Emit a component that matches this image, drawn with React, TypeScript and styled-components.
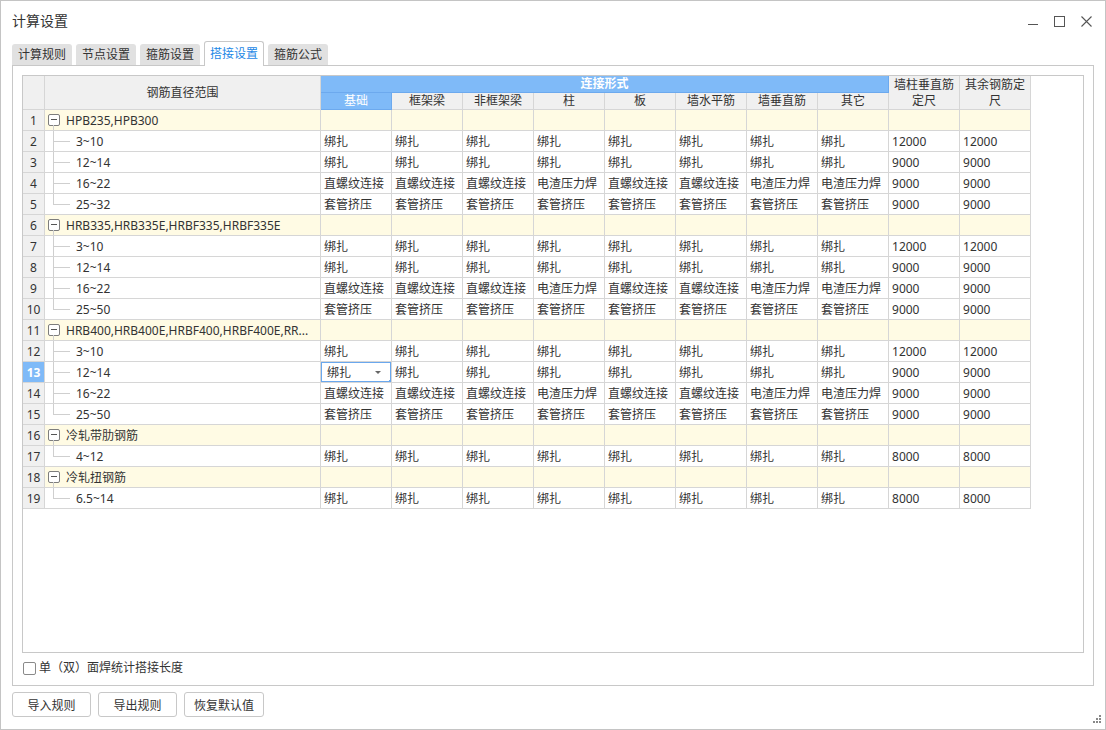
import React from "react";
import styled, { createGlobalStyle, css } from "styled-components";

const GlobalStyle = createGlobalStyle`
  html, body {
    margin: 0;
    padding: 0;
    background: #ffffff;
  }
  body {
    font-family: "Noto Sans", "Noto Sans CJK SC", sans-serif;
    font-size: 12px;
    color: #333333;
  }
  * { box-sizing: border-box; }
`;

type Group = { kind: "group"; num: number; label: string };
type Item = {
  kind: "item";
  num: number;
  label: string;
  values: string[];
  last: boolean;
  editing?: boolean;
};
type Row = Group | Item;

const tie = Array(8).fill("绑扎");
const thread = [
  "直螺纹连接",
  "直螺纹连接",
  "直螺纹连接",
  "电渣压力焊",
  "直螺纹连接",
  "直螺纹连接",
  "电渣压力焊",
  "电渣压力焊",
];
const sleeve = Array(8).fill("套管挤压");

// the grid shows the long group name already shortened
const rows: Row[] = [
  { kind: "group", num: 1, label: "HPB235,HPB300" },
  { kind: "item", num: 2, label: "3~10", values: [...tie, "12000", "12000"], last: false },
  { kind: "item", num: 3, label: "12~14", values: [...tie, "9000", "9000"], last: false },
  { kind: "item", num: 4, label: "16~22", values: [...thread, "9000", "9000"], last: false },
  { kind: "item", num: 5, label: "25~32", values: [...sleeve, "9000", "9000"], last: true },
  { kind: "group", num: 6, label: "HRB335,HRB335E,HRBF335,HRBF335E" },
  { kind: "item", num: 7, label: "3~10", values: [...tie, "12000", "12000"], last: false },
  { kind: "item", num: 8, label: "12~14", values: [...tie, "9000", "9000"], last: false },
  { kind: "item", num: 9, label: "16~22", values: [...thread, "9000", "9000"], last: false },
  { kind: "item", num: 10, label: "25~50", values: [...sleeve, "9000", "9000"], last: true },
  { kind: "group", num: 11, label: "HRB400,HRB400E,HRBF400,HRBF400E,RR..." },
  { kind: "item", num: 12, label: "3~10", values: [...tie, "12000", "12000"], last: false },
  { kind: "item", num: 13, label: "12~14", values: [...tie, "9000", "9000"], last: false, editing: true },
  { kind: "item", num: 14, label: "16~22", values: [...thread, "9000", "9000"], last: false },
  { kind: "item", num: 15, label: "25~50", values: [...sleeve, "9000", "9000"], last: true },
  { kind: "group", num: 16, label: "冷轧带肋钢筋" },
  { kind: "item", num: 17, label: "4~12", values: [...tie, "8000", "8000"], last: true },
  { kind: "group", num: 18, label: "冷轧扭钢筋" },
  { kind: "item", num: 19, label: "6.5~14", values: [...tie, "8000", "8000"], last: true },
];

const subHeaders = ["基础", "框架梁", "非框架梁", "柱", "板", "墙水平筋", "墙垂直筋", "其它"];
const tabs = ["计算规则", "节点设置", "箍筋设置", "搭接设置", "箍筋公式"];

const Window = styled.div`
  position: relative;
  width: 1106px;
  height: 730px;
  border: 1px solid #c4c4c4;
  background: #ffffff;
  display: flex;
  flex-direction: column;
`;

const TitleBar = styled.div`
  height: 40px;
  padding: 0 11px;
  display: flex;
  align-items: center;
  justify-content: space-between;
`;

const Title = styled.div`
  font-size: 14px;
  color: #333;
  line-height: 20px;
`;

const Controls = styled.div`
  display: flex;
  align-items: center;
  gap: 16px;
  padding-right: 2px;
  color: #555;
  svg { display: block; }
`;

const TabBar = styled.div`
  height: 24px;
  padding-left: 11px;
  display: flex;
  align-items: flex-end;
  gap: 4px;
  position: relative;
  z-index: 1;
`;

const Tab = styled.div<{ $active?: boolean }>`
  width: 60px;
  text-align: center;
  border-radius: 3px 3px 0 0;
  ${(p) =>
    p.$active
      ? css`
          height: 25px;
          line-height: 24px;
          margin-bottom: -1px;
          background: #ffffff;
          color: #1d88e6;
          border: 1px solid #c8c8c8;
          border-bottom: none;
        `
      : css`
          height: 21px;
          line-height: 21px;
          background: #e1e1e1;
          color: #333;
        `}
`;

const Panel = styled.div`
  margin: 0 11px;
  height: 621px;
  border: 1px solid #c8c8c8;
  padding: 9px 9px 0 9px;
  display: flex;
  flex-direction: column;
`;

const GridBox = styled.div`
  height: 578px;
  border: 1px solid #c8c8c8;
  overflow: hidden;
  background: #fff;
`;

const Grid = styled.table`
  border-collapse: separate;
  border-spacing: 0;
  table-layout: fixed;
  width: 1008px;
`;

const cellBase = css`
  padding: 0;
  border-right: 1px solid #d6d6d6;
  border-bottom: 1px solid #d6d6d6;
  white-space: nowrap;
  overflow: hidden;
  font-weight: normal;
`;

const HeadCell = styled.th<{ $blue?: boolean; $wrap?: boolean }>`
  ${cellBase};
  line-height: 16px;
  text-align: center;
  vertical-align: middle;
  background: ${(p) => (p.$blue ? "#7fbaf8" : "#f0f0f0")};
  color: ${(p) => (p.$blue ? "#ffffff" : "#333")};
  ${(p) =>
    p.$blue &&
    css`
      border-right-color: #6ca9ee;
      border-bottom-color: #6ca9ee;
    `}
  ${(p) =>
    p.$wrap &&
    css`
      white-space: normal;
      word-break: break-all;
      padding: 0 1px;
    `}
`;

const GroupTitle = styled(HeadCell)`
  font-weight: bold;
  height: 15px;
`;

const SubHead = styled(HeadCell)`
  height: 16px;
`;

const NumCell = styled.td<{ $active?: boolean }>`
  ${cellBase};
  height: 20px;
  text-align: center;
  background: ${(p) => (p.$active ? "#7fbaf8" : "#f0f0f0")};
  color: ${(p) => (p.$active ? "#fff" : "#333")};
  font-weight: ${(p) => (p.$active ? "bold" : "normal")};
`;

const Cell = styled.td<{ $group?: boolean }>`
  ${cellBase};
  height: 20px;
  padding-left: 3px;
  background: ${(p) => (p.$group ? "#fffbe4" : "#ffffff")};
  position: relative;
`;

const NameCell = styled(Cell)`
  padding-left: 3px;
  padding-right: 4px;
`;

const NameWrap = styled.div`
  display: flex;
  align-items: center;
  height: 20px;
  min-width: 0;
`;

const Collapse = styled.span`
  position: relative;
  flex: none;
  width: 12px;
  height: 12px;
  border: 1px solid #7d7d7d;
  border-radius: 2px;
  background: #fff;
  margin-right: 6px;
  &::before {
    content: "";
    position: absolute;
    left: 2px;
    right: 2px;
    top: 4px;
    border-top: 1px solid #555;
  }
  &::after {
    content: "";
    position: absolute;
    left: 4px;
    top: 10px;
    height: 6px;
    border-left: 1px solid #cfcfcf;
  }
`;

const Connector = styled.span<{ $last: boolean }>`
  position: relative;
  flex: none;
  width: 23px;
  height: 20px;
  margin-right: 5px;
  &::before {
    content: "";
    position: absolute;
    left: 5px;
    top: -1px;
    bottom: ${(p) => (p.$last ? "10px" : "-1px")};
    border-left: 1px solid #cfcfcf;
  }
  &::after {
    content: "";
    position: absolute;
    left: 5px;
    top: 10px;
    width: 17px;
    border-top: 1px solid #cfcfcf;
  }
`;

const Label = styled.span`
  white-space: nowrap;
`;

const Editor = styled.div`
  position: absolute;
  left: -1px;
  top: -1px;
  right: -1px;
  bottom: -1px;
  border: 2px solid #6aa8ee;
  background: #fff;
  display: flex;
  align-items: center;
  justify-content: space-between;
  padding: 0 9px 0 5px;
  &::after {
    content: "";
    position: absolute;
    right: -3px;
    bottom: -3px;
    width: 4px;
    height: 4px;
    background: #6aa8ee;
  }
`;

const Caret = styled.span`
  width: 0;
  height: 0;
  border-left: 3px solid transparent;
  border-right: 3px solid transparent;
  border-top: 3px solid #666;
`;

const Options = styled.label`
  display: flex;
  align-items: center;
  height: 14px;
  margin-top: 8px;
  margin-left: 1px;
  color: #333;
  line-height: 14px;
`;

const Check = styled.span`
  width: 13px;
  height: 13px;
  border: 1px solid #8a8a8a;
  border-radius: 2px;
  background: #fff;
  margin-right: 3px;
`;

const ButtonRow = styled.div`
  display: flex;
  gap: 7px;
  padding: 6px 11px 0;
`;

const Button = styled.button<{ $w: number }>`
  width: ${(p) => p.$w}px;
  height: 25px;
  border: 1px solid #c8c8c8;
  border-radius: 3px;
  background: #fff;
  font-family: inherit;
  font-size: 12px;
  color: #333;
  padding: 0;
`;

const Grip = styled.svg`
  position: absolute;
  right: 4px;
  bottom: 6px;
`;

function WindowControls() {
  return (
    <Controls>
      <svg width="10" height="12" viewBox="0 0 10 12">
        <line x1="0" y1="9.5" x2="10" y2="9.5" stroke="#555" strokeWidth="1" />
      </svg>
      <svg width="11" height="11" viewBox="0 0 11 11">
        <rect x="0.5" y="0.5" width="10" height="10" fill="none" stroke="#555" strokeWidth="1" />
      </svg>
      <svg width="11" height="11" viewBox="0 0 11 11">
        <path d="M0.5 0.5 L10.5 10.5 M10.5 0.5 L0.5 10.5" stroke="#555" strokeWidth="1.1" />
      </svg>
    </Controls>
  );
}

function RebarGrid() {
  return (
    <Grid>
      <colgroup>
        <col style={{ width: 22 }} />
        <col style={{ width: 276 }} />
        {Array.from({ length: 10 }).map((_, i) => (
          <col key={i} style={{ width: 71 }} />
        ))}
      </colgroup>
      <thead>
        <tr>
          <HeadCell rowSpan={2} />
          <HeadCell rowSpan={2}>钢筋直径范围</HeadCell>
          <GroupTitle colSpan={8} $blue>
            连接形式
          </GroupTitle>
          <HeadCell rowSpan={2} $wrap>
            墙柱垂直筋定尺
          </HeadCell>
          <HeadCell rowSpan={2} $wrap>
            其余钢筋定尺
          </HeadCell>
        </tr>
        <tr>
          {subHeaders.map((h, i) => (
            <SubHead key={h} $blue={i === 0}>
              {h}
            </SubHead>
          ))}
        </tr>
      </thead>
      <tbody>
        {rows.map((r) =>
          r.kind === "group" ? (
            <tr key={r.num}>
              <NumCell>{r.num}</NumCell>
              <NameCell $group>
                <NameWrap>
                  <Collapse />
                  <Label>{r.label}</Label>
                </NameWrap>
              </NameCell>
              {Array.from({ length: 10 }).map((_, i) => (
                <Cell key={i} $group />
              ))}
            </tr>
          ) : (
            <tr key={r.num}>
              <NumCell $active={r.editing}>{r.num}</NumCell>
              <NameCell>
                <NameWrap>
                  <Connector $last={r.last} />
                  <Label>{r.label}</Label>
                </NameWrap>
              </NameCell>
              {r.values.map((v, i) => (
                <Cell key={i}>
                  {r.editing && i === 0 ? (
                    <Editor>
                      <span>{v}</span>
                      <Caret />
                    </Editor>
                  ) : (
                    v
                  )}
                </Cell>
              ))}
            </tr>
          )
        )}
      </tbody>
    </Grid>
  );
}

export default function App() {
  return (
    <>
      <GlobalStyle />
      <Window>
        <TitleBar>
          <Title>计算设置</Title>
          <WindowControls />
        </TitleBar>
        <TabBar>
          {tabs.map((t) => (
            <Tab key={t} $active={t === "搭接设置"}>
              {t}
            </Tab>
          ))}
        </TabBar>
        <Panel>
          <GridBox>
            <RebarGrid />
          </GridBox>
          <Options>
            <Check />
            单（双）面焊统计搭接长度
          </Options>
        </Panel>
        <ButtonRow>
          <Button $w={79}>导入规则</Button>
          <Button $w={79}>导出规则</Button>
          <Button $w={80}>恢复默认值</Button>
        </ButtonRow>
        <Grip width="8" height="8" viewBox="0 0 8 8">
          <rect x="6" y="0" width="2" height="2" fill="#888" />
          <rect x="3" y="3" width="2" height="2" fill="#888" />
          <rect x="6" y="3" width="2" height="2" fill="#888" />
          <rect x="0" y="6" width="2" height="2" fill="#888" />
          <rect x="3" y="6" width="2" height="2" fill="#888" />
          <rect x="6" y="6" width="2" height="2" fill="#888" />
        </Grip>
      </Window>
    </>
  );
}
